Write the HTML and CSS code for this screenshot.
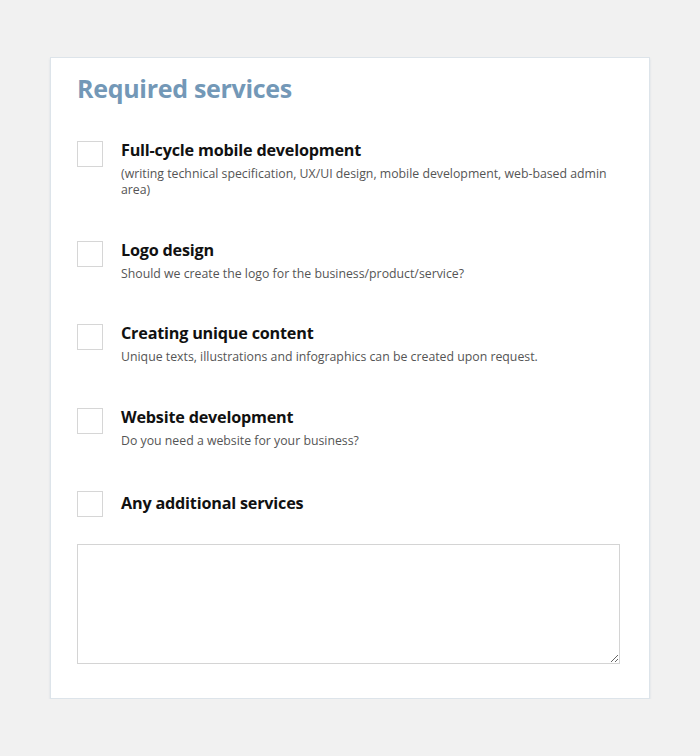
FILE: index.html
```html
<!DOCTYPE html>
<html>
<head>
<meta charset="utf-8">
<link rel="stylesheet" href="styles.css">
</head>
<body>
<div class="card">
  <h2 class="title">Required services</h2>
  <div class="list">
    <label class="item">
      <span class="box"></span>
      <span class="text">
        <span class="name">Full-cycle mobile development</span>
        <span class="desc">(writing technical specification, UX/UI design, mobile development, web-based admin area)</span>
      </span>
    </label>
    <label class="item">
      <span class="box"></span>
      <span class="text">
        <span class="name">Logo design</span>
        <span class="desc">Should we create the logo for the business/product/service?</span>
      </span>
    </label>
    <label class="item">
      <span class="box"></span>
      <span class="text">
        <span class="name">Creating unique content</span>
        <span class="desc">Unique texts, illustrations and infographics can be created upon request.</span>
      </span>
    </label>
    <label class="item">
      <span class="box"></span>
      <span class="text">
        <span class="name">Website development</span>
        <span class="desc">Do you need a website for your business?</span>
      </span>
    </label>
    <label class="item last">
      <span class="box"></span>
      <span class="text">
        <span class="name">Any additional services</span>
      </span>
    </label>
  </div>
  <textarea class="extra"></textarea>
</div>
</body>
</html>
```
FILE: styles.css
```css
html, body {
  margin: 0;
  padding: 0;
  background: #f1f1f1;
}
body {
  padding: 57px 50px 0 50px;
  font-family: "Open Sans", "Liberation Sans", sans-serif;
}
.card {
  width: 600px;
  box-sizing: border-box;
  background: #fff;
  border: 1px solid #dde4ea;
  box-shadow: 0 2px 2px rgba(160, 180, 200, 0.35);
  padding: 12px 30px 34px 26px;
}
.title {
  margin: 0;
  font-family: "Open Sans", sans-serif;
  font-weight: 700;
  font-size: 25px;
  line-height: 36px;
  color: #7398b7;
  letter-spacing: -0.3px;
}
.list {
  display: flex;
  flex-direction: column;
  margin-top: 35px;
}
.item {
  display: flex;
  gap: 18px;
  align-items: flex-start;
}
.item:nth-child(1) { height: 100px; }
.item:nth-child(2) { height: 83px; }
.item:nth-child(3) { height: 84px; }
.item:nth-child(4) { height: 83px; }
.item:nth-child(5) { height: 53px; }
.box {
  flex: none;
  width: 24px;
  height: 24px;
  border: 1px solid #d6d6d6;
  background: #fff;
}
.text {
  display: flex;
  flex-direction: column;
  margin-top: -3px;
}
.last .text {
  margin-top: 0;
}
.name {
  font-weight: 700;
  font-size: 16.2px;
  line-height: 24px;
  color: #111;
  letter-spacing: -0.2px;
}
.desc {
  font-size: 12.3px;
  line-height: 16px;
  color: #555;
  margin-top: 4px;
}
.extra {
  display: block;
  width: 543px;
  height: 120px;
  box-sizing: border-box;
  border: 1px solid #d4d4d4;
  margin: 0;
  resize: vertical;
  background: #fff;
}
```
